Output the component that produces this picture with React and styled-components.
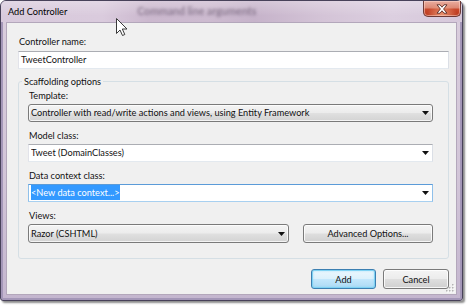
import React from "react";
import styled, { createGlobalStyle, css } from "styled-components";

const FONT_SIZE = "9.2px";

const GlobalStyle = createGlobalStyle`
  html, body { margin: 0; padding: 0; background: #ffffff; }
  body {
    font-family: Lato, "Segoe UI", "Noto Sans", sans-serif;
    font-size: ${FONT_SIZE};
    color: #111111;
  }
  * { box-sizing: border-box; }
`;

const Stage = styled.div`
  position: relative;
  width: 470px;
  height: 307px;
  overflow: hidden;
  background: #ffffff;
`;

const Window = styled.div`
  width: 463px;
  height: 301px;
  border: 1px solid #48425a;
  border-radius: 6px 6px 3px 3px;
  padding: 0 5px 5px;
  display: flex;
  flex-direction: column;
  background: linear-gradient(180deg, #dacedd 0%, #d2c5d8 60%, #c4b6cf 100%);
  box-shadow: inset 0 0 0 2px #a497b8, 2px 2px 2px rgba(0, 0, 0, 0.45);
`;

const TitleBar = styled.div`
  height: 21px;
  margin: 0 -5px;
  display: flex;
  align-items: flex-start;
  border-radius: 5px 5px 0 0;
  background:
    linear-gradient(180deg, rgba(255, 255, 255, 0.25), rgba(255, 255, 255, 0) 70%),
    linear-gradient(90deg, #d8cadc 0%, #dacbdd 22%, #cbb8ce 32%, #cdbbd0 45%, #c6b3ca 55%, #d4c4d7 70%, #dccfe0 85%, #d6c8da 100%);
`;

const Title = styled.span`
  margin: 4px 0 0 7px;
  line-height: 13px;
  font-size: ${FONT_SIZE};
  color: #000;
  white-space: nowrap;
`;

const GhostText = styled.span`
  margin: 4px 0 0 70px;
  filter: blur(1.4px);
  color: rgba(40, 25, 50, 0.42);
  font-size: 10.5px;
  font-weight: 700;
  line-height: 13px;
  white-space: nowrap;
`;

const CloseButton = styled.div`
  margin-left: auto;
  margin-right: 1px;
  width: 38px;
  height: 16px;
  display: flex;
  align-items: center;
  justify-content: center;
  border: 1px solid #6e3a36;
  border-top: none;
  border-radius: 0 0 5px 5px;
  background:
    radial-gradient(ellipse at 50% 100%, rgba(255, 190, 150, 0.7), rgba(255, 190, 150, 0) 60%),
    linear-gradient(180deg, #eaaea0 0%, #dc8874 45%, #c8482c 55%, #b9391e 100%);
  box-shadow: inset 0 0 0 1px rgba(255, 220, 210, 0.5);
`;

const Client = styled.div`
  position: relative;
  flex: 1;
  border: 1px solid #b3a7bb;
  background: #f0f0f0;
  padding: 11px 7px 0 11px;
  display: flex;
  flex-direction: column;
  align-items: flex-start;
`;

const FieldLabel = styled.div`
  line-height: 16px;
  margin-top: ${(p) => p.$gap || 0}px;
  padding-left: 1px;
  white-space: nowrap;
`;

const TextBox = styled.div`
  width: 431px;
  height: 18px;
  margin-top: 1px;
  padding: 0 2px;
  line-height: 16px;
  background: #ffffff;
  border: 1px solid;
  border-color: #abadb3 #dbdfe6 #e3e9ef #e2e3ea;
  white-space: nowrap;
`;

const Group = styled.fieldset`
  width: 431px;
  margin: 6px 0 0;
  min-inline-size: 0;
  border: 1px solid #d5dfe5;
  border-radius: 3px;
  padding: 0 15px 15px 9px;
  display: flex;
  flex-direction: column;
  align-items: flex-start;
`;

const Legend = styled.legend`
  margin-left: -6px;
  padding: 0 2px;
  line-height: 13px;
  font-size: ${FONT_SIZE};
`;

const comboVariants = {
  button: css`
    border: 1px solid #7a7a7a;
    border-radius: 3px;
    background: linear-gradient(180deg, #f4f4f4 0%, #ececec 48%, #e0e0e0 52%, #d3d3d3 100%);
    box-shadow: inset 0 0 0 1px rgba(255, 255, 255, 0.75);
  `,
  edit: css`
    border: 1px solid;
    border-color: #abadb3 #dbdfe6 #e3e9ef #e2e3ea;
    background: #ffffff;
  `,
  focus: css`
    border: 1px solid;
    border-color: #5b9bd8 #8fc0ea #a8d0f0 #8fc0ea;
    background: #ffffff;
  `,
};

const Combo = styled.div`
  display: flex;
  align-items: center;
  width: ${(p) => p.$width}px;
  height: ${(p) => p.$height || 18}px;
  padding: 0 3px 0 2px;
  ${(p) => comboVariants[p.$variant || "edit"]}
`;

const ComboText = styled.span`
  flex: 1;
  min-width: 0;
  line-height: 16px;
  white-space: nowrap;
  overflow: hidden;
`;

const Selection = styled.span`
  background: #3399ff;
  color: #ffffff;
  padding: 2px 0;
`;

const Row = styled.div`
  display: flex;
  gap: 14px;
`;

const Button = styled.div`
  width: ${(p) => p.$width}px;
  height: ${(p) => p.$height || 20}px;
  display: flex;
  align-items: center;
  justify-content: center;
  white-space: nowrap;
  border: 1px solid #7a7a7a;
  border-radius: 3px;
  background: linear-gradient(180deg, #f4f4f4 0%, #ececec 48%, #dedede 52%, #d0d0d0 100%);
  box-shadow: inset 0 0 0 1px rgba(255, 255, 255, 0.8);
  ${(p) =>
    p.$default &&
    css`
      border-color: #3c7fb1;
      background: linear-gradient(180deg, #ecf7fd 0%, #dcf1fc 48%, #c3e7fc 52%, #acdaf4 100%);
      box-shadow: inset 0 0 0 1px #7fd2f3, inset 0 0 2px 1px rgba(120, 210, 245, 0.6);
    `}
`;

const ButtonRow = styled.div`
  align-self: stretch;
  margin-top: 10px;
  display: flex;
  justify-content: flex-end;
  gap: 7px;
`;

const Grip = styled.svg`
  position: absolute;
  right: 1px;
  bottom: 1px;
`;

const Cursor = styled.svg`
  position: absolute;
  left: 116px;
  top: 18px;
`;

const DropArrow = () => (
  <svg width="7" height="4" viewBox="0 0 7 4">
    <path d="M0 0 H7 L3.5 4 Z" fill="#111" />
  </svg>
);

const CloseGlyph = () => (
  <svg width="12" height="10" viewBox="0 0 12 10">
    <path
      d="M1 0.8 H4 L6 3.2 L8 0.8 H11 L7.6 5 L11 9.2 H8 L6 6.8 L4 9.2 H1 L4.4 5 Z"
      fill="#ffffff"
      stroke="#5a2a24"
      strokeWidth="0.9"
      strokeLinejoin="round"
    />
  </svg>
);

const gripDots = [
  [8, 2], [8, 5], [5, 5], [8, 8], [5, 8], [2, 8],
];

export default function App() {
  return (
    <>
      <GlobalStyle />
      <Stage>
        <Window>
          <TitleBar>
            <Title>Add Controller</Title>
            <GhostText>Command line arguments</GhostText>
            <CloseButton>
              <CloseGlyph />
            </CloseButton>
          </TitleBar>
          <Client>
            <FieldLabel>Controller name:</FieldLabel>
            <TextBox>TweetController</TextBox>
            <Group>
              <Legend>Scaffolding options</Legend>
              <FieldLabel>Template:</FieldLabel>
              <Combo $variant="button" $width={405}>
                <ComboText>Controller with read/write actions and views, using Entity Framework</ComboText>
                <DropArrow />
              </Combo>
              <FieldLabel $gap={6}>Model class:</FieldLabel>
              <Combo $variant="edit" $width={405}>
                <ComboText>Tweet (DomainClasses)</ComboText>
                <DropArrow />
              </Combo>
              <FieldLabel $gap={6}>Data context class:</FieldLabel>
              <Combo $variant="focus" $width={405}>
                <ComboText>
                  <Selection>&lt;New data context...&gt;</Selection>
                </ComboText>
                <DropArrow />
              </Combo>
              <FieldLabel $gap={6}>Views:</FieldLabel>
              <Row>
                <Combo $variant="button" $width={261} $height={19}>
                  <ComboText>Razor (CSHTML)</ComboText>
                  <DropArrow />
                </Combo>
                <Button $width={130} $height={19}>Advanced Options...</Button>
              </Row>
            </Group>
            <ButtonRow>
              <Button $default $width={65}>Add</Button>
              <Button $width={66}>Cancel</Button>
            </ButtonRow>
            <Grip width="11" height="11" viewBox="0 0 11 11">
              {gripDots.map(([x, y]) => (
                <g key={`${x}-${y}`}>
                  <rect x={x + 1} y={y + 1} width="1.5" height="1.5" fill="#ffffff" />
                  <rect x={x} y={y} width="1.5" height="1.5" fill="#b4b4b4" />
                </g>
              ))}
            </Grip>
          </Client>
        </Window>
        <Cursor width="12" height="19" viewBox="0 0 12 19">
          <path
            d="M0.5 0.5 V15.5 L4 12 L6.5 17.5 L8.8 16.5 L6.3 11 H11 Z"
            fill="#ffffff"
            stroke="#3a3a3a"
            strokeWidth="1"
            strokeLinejoin="round"
          />
        </Cursor>
      </Stage>
    </>
  );
}
